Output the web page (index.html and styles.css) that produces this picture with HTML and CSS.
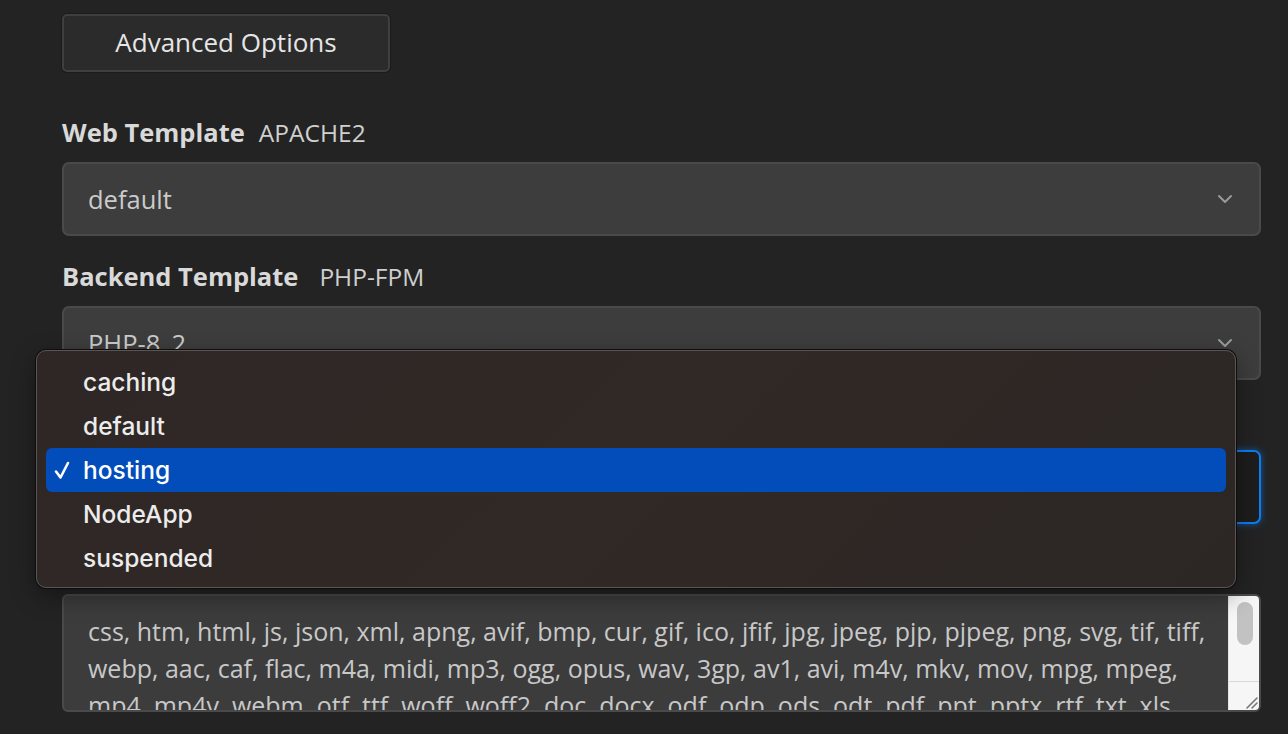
FILE: index.html
```html
<!DOCTYPE html>
<html>
<head>
<meta charset="utf-8">
<link rel="stylesheet" href="styles.css">
</head>
<body>
<div class="page">
  <button class="adv-btn">Advanced Options</button>

  <div class="field first">
    <div class="label"><b>Web Template</b><span class="sub">APACHE2</span></div>
    <div class="select">
      <span class="val">default</span>
      <svg class="chev" width="16" height="10" viewBox="0 0 16 10"><path d="M2 2l6 6 6-6" fill="none" stroke="#9a9a9a" stroke-width="2" stroke-linecap="round" stroke-linejoin="round"/></svg>
    </div>
  </div>

  <div class="field">
    <div class="label"><b>Backend Template</b><span class="sub wide">PHP-FPM</span></div>
    <div class="select">
      <span class="val">PHP-8_2</span>
      <svg class="chev" width="16" height="10" viewBox="0 0 16 10"><path d="M2 2l6 6 6-6" fill="none" stroke="#9a9a9a" stroke-width="2" stroke-linecap="round" stroke-linejoin="round"/></svg>
    </div>
  </div>

  <div class="field">
    <div class="label"><b>Proxy Template</b><span class="sub">NGINX</span></div>
    <div class="select focused">
      <span class="val">hosting</span>
    </div>
  </div>

  <div class="field">
    <div class="label"><b>Proxy Extensions</b></div>
    <div class="textarea">
      <div class="ta-text">
        <div class="ln">css, htm, html, js, json, xml, apng, avif, bmp, cur, gif, ico, jfif, jpg, jpeg, pjp, pjpeg, png, svg, tif, tiff,</div>
        <div class="ln">webp, aac, caf, flac, m4a, midi, mp3, ogg, opus, wav, 3gp, av1, avi, m4v, mkv, mov, mpg, mpeg,</div>
        <div class="ln">mp4, mp4v, webm, otf, ttf, woff, woff2, doc, docx, odf, odp, ods, odt, pdf, ppt, pptx, rtf, txt, xls,</div>
      </div>
      <div class="scrollbar">
        <div class="track"><div class="thumb"></div></div>
        <div class="corner">
          <svg width="16" height="16" viewBox="0 0 16 16"><path d="M14 4L4 14M14 9L9 14" stroke="#777" stroke-width="1.6" stroke-linecap="round"/></svg>
        </div>
      </div>
    </div>
  </div>

  <div class="menu">
    <div class="item">caching</div>
    <div class="item">default</div>
    <div class="item sel"><svg class="check" width="18" height="20" viewBox="0 0 18 20"><path d="M3 11.5l4.5 6L15 3" fill="none" stroke="#fff" stroke-width="2.6" stroke-linecap="round" stroke-linejoin="round"/></svg>hosting</div>
    <div class="item">NodeApp</div>
    <div class="item">suspended</div>
  </div>
</div>
</body>
</html>
```
FILE: styles.css
```css
html, body {
  margin: 0;
  padding: 0;
  background: #232323;
  overflow: hidden;
}
body {
  font-family: "Open Sans", "DejaVu Sans", sans-serif;
  color: #d6d6d6;
}
.page {
  position: relative;
  padding: 14px 27px 0 62px;
  height: 734px;
  box-sizing: border-box;
}
.adv-btn {
  display: block;
  width: 328px;
  height: 58px;
  background: #2b2b2b;
  border: 2px solid #3f3f3f;
  border-radius: 5px;
  box-shadow: 0 0 0 1px #1b1b1b;
  color: #e6e6e6;
  font-family: "Open Sans", sans-serif;
  font-size: 26px;
  padding: 0 0 3px 0;
  margin: 0;
}
.field {
  margin-top: 24px;
}
.field.first {
  margin-top: 44px;
}
.label {
  display: flex;
  align-items: baseline;
  height: 32px;
  line-height: 32px;
  margin-bottom: 14px;
  font-size: 25.5px;
}
.label b {
  font-weight: 700;
  color: #d9d9d9;
}
.label .sub {
  margin-left: 14px;
  font-size: 24.5px;
  color: #cfcfcf;
  font-weight: 400;
}
.label .sub.wide {
  margin-left: 21px;
}
.select {
  height: 74px;
  box-sizing: border-box;
  background: #3d3d3d;
  border: 2px solid #4a4a4a;
  border-radius: 7px;
  display: flex;
  align-items: center;
  justify-content: space-between;
  padding: 0 26px 0 24px;
}
.select .val {
  font-size: 25.5px;
  color: #cbcbcb;
}
.select.focused {
  background: #1d1d1d;
  border-color: #0b7ef2;
  box-shadow: 0 0 6px 1px rgba(11, 126, 242, 0.45);
}
.textarea {
  height: 118px;
  box-sizing: border-box;
  background: #3c3c3c;
  border: 2px solid #4a4a4a;
  border-radius: 6px;
  display: flex;
  overflow: hidden;
}
.ta-text {
  flex: 1;
  padding: 17px 0 0 24px;
  font-size: 25px;
  line-height: 37px;
  color: #c8c8c8;
  overflow: hidden;
}
.ln {
  white-space: nowrap;
}
.scrollbar {
  width: 30px;
  background: #f6f6f6;
  display: flex;
  flex-direction: column;
  border-left: 1px solid #e6e6e6;
}
.track {
  flex: 1;
  padding: 6px 0 0 8px;
}
.thumb {
  width: 16px;
  height: 43px;
  border-radius: 8px;
  background: #c2c2c2;
}
.corner {
  height: 28px;
  border-top: 1px solid #d8d8d8;
  display: flex;
  align-items: flex-end;
  justify-content: flex-end;
}
.menu {
  position: absolute;
  left: 36px;
  top: 350px;
  width: 1200px;
  height: 238px;
  box-sizing: border-box;
  background: linear-gradient(135deg, #2e2725 0%, #302926 50%, #2c2624 100%);
  border: 1px solid #5b5553;
  border-radius: 10px;
  box-shadow: 0 0 0 1px #0d0d0d, 0 8px 24px rgba(0,0,0,0.4);
  padding: 9px 9px;
  font-family: "Inter", "Roboto", sans-serif;
  font-size: 24.5px;
  font-weight: 500;
  color: #ececec;
}
.item {
  height: 44px;
  line-height: 44px;
  padding-left: 37px;
  position: relative;
  border-radius: 6px;
}
.item.sel {
  background: #034dbb;
  color: #ffffff;
}
.check {
  position: absolute;
  left: 7px;
  top: 12px;
}
```
